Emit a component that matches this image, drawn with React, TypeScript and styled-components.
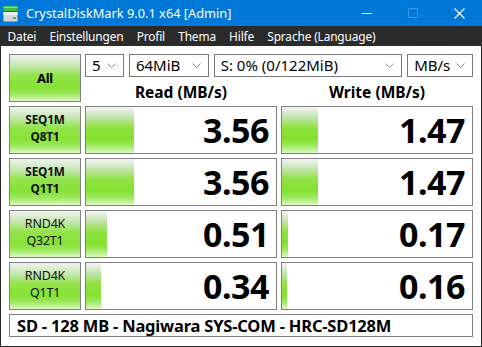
import styled, { createGlobalStyle } from 'styled-components';

const GlobalStyle = createGlobalStyle`
  html, body {
    margin: 0;
    padding: 0;
    background: #ffffff;
  }
  body {
    font-family: 'Noto Sans', 'Open Sans', sans-serif;
  }
`;

interface Result {
  line1: string;
  line2: string;
  bold: boolean;
  read: string;
  write: string;
  readFill: number;
  writeFill: number;
}

const results: Result[] = [
  { line1: 'SEQ1M', line2: 'Q8T1', bold: true, read: '3.56', write: '1.47', readFill: 48, writeFill: 36 },
  { line1: 'SEQ1M', line2: 'Q1T1', bold: true, read: '3.56', write: '1.47', readFill: 48, writeFill: 36 },
  { line1: 'RND4K', line2: 'Q32T1', bold: false, read: '0.51', write: '0.17', readFill: 21, writeFill: 6 },
  { line1: 'RND4K', line2: 'Q1T1', bold: false, read: '0.34', write: '0.16', readFill: 15, writeFill: 5 },
];

const menus = ['Datei', 'Einstellungen', 'Profil', 'Thema', 'Hilfe', 'Sprache (Language)'];

const combos = [
  { label: '5', width: 39 },
  { label: '64MiB', width: 80 },
  { label: 'S: 0% (0/122MiB)', width: 189 },
  { label: 'MB/s', width: 66 },
];

const DriveIcon = () => (
  <svg width="15" height="16" viewBox="0 0 15 16">
    <rect x="0.5" y="0.5" width="14" height="4.5" fill="#3cbf3c" />
    <rect x="0.5" y="0.5" width="14" height="1.5" fill="#7de07d" />
    <rect x="0.5" y="5" width="14" height="1" fill="#2d6e2d" />
    <rect x="0.5" y="6" width="14" height="9.5" fill="#d6d6d6" />
    <rect x="0.5" y="6" width="14" height="3" fill="#eeeeee" />
    <rect x="10" y="11" width="3" height="2" fill="#3cbf3c" />
  </svg>
);

const Chevron = () => (
  <svg width="9" height="5" viewBox="0 0 9 5">
    <path d="M0.5 0.5 L4.5 4.5 L8.5 0.5" fill="none" stroke="#8a8a8a" strokeWidth="1" />
  </svg>
);

const App = () => {
  return (
    <Window>
      <GlobalStyle />
      <TitleBar>
        <IconBox>
          <DriveIcon />
        </IconBox>
        <TitleText>CrystalDiskMark 9.0.1 x64 [Admin]</TitleText>
        <Controls>
          <ControlButton>
            <svg width="10" height="10" viewBox="0 0 10 10">
              <path d="M0 5.5 H10" stroke="#ffffff" strokeWidth="1" />
            </svg>
          </ControlButton>
          <ControlButton>
            <svg width="10" height="10" viewBox="0 0 10 10">
              <rect x="0.5" y="0.5" width="9" height="9" fill="none" stroke="#3d98e0" strokeWidth="1" />
            </svg>
          </ControlButton>
          <ControlButton>
            <svg width="11" height="11" viewBox="0 0 11 11">
              <path d="M0.5 0.5 L10.5 10.5 M10.5 0.5 L0.5 10.5" stroke="#ffffff" strokeWidth="1.1" />
            </svg>
          </ControlButton>
        </Controls>
      </TitleBar>
      <MenuBar>
        {menus.map(m => (
          <MenuItem key={m}>{m}</MenuItem>
        ))}
      </MenuBar>
      <Client>
        <Grid>
          <TestButton>
            <AllLabel>All</AllLabel>
          </TestButton>
          <TopArea>
            <ComboRow>
              {combos.map(c => (
                <Combo key={c.label} $width={c.width}>
                  <span>{c.label}</span>
                  <Chevron />
                </Combo>
              ))}
            </ComboRow>
            <HeaderRow>
              <Header>Read (MB/s)</Header>
              <Header>Write (MB/s)</Header>
            </HeaderRow>
          </TopArea>
          {results.map((r, i) => (
            <Row key={i} r={r} />
          ))}
          <Footer>SD - 128 MB - Nagiwara SYS-COM - HRC-SD128M</Footer>
        </Grid>
      </Client>
    </Window>
  );
};

const Row = ({ r }: { r: Result }) => (
  <>
    <TestButton>
      <TestLabel $bold={r.bold}>
        <LabelLine>{r.line1}</LabelLine>
        <LabelLine>{r.line2}</LabelLine>
      </TestLabel>
    </TestButton>
    <Meter>
      <Fill style={{ width: r.readFill }} />
      <Value>{r.read}</Value>
    </Meter>
    <Meter>
      <Fill style={{ width: r.writeFill }} />
      <Value>{r.write}</Value>
    </Meter>
  </>
);

export default App;

const Window = styled.div`
  width: 482px;
  height: 347px;
  display: flex;
  flex-direction: column;
  box-sizing: border-box;
  overflow: hidden;
`;

const TitleBar = styled.div`
  height: 26px;
  background: #0078d7;
  display: flex;
  align-items: center;
  color: #ffffff;
`;

const IconBox = styled.div`
  width: 15px;
  height: 16px;
  margin-left: 3px;
  margin-top: 2px;
  display: flex;
`;

const TitleText = styled.div`
  margin-left: 8px;
  font-size: 12.8px;
  line-height: 26px;
  flex: 1;
`;

const Controls = styled.div`
  display: flex;
  height: 26px;
`;

const ControlButton = styled.div`
  width: 46px;
  height: 26px;
  display: flex;
  align-items: center;
  justify-content: center;
`;

const MenuBar = styled.div`
  height: 20px;
  background: #2b2b2b;
  display: flex;
  align-items: center;
  padding-left: 1px;
`;

const MenuItem = styled.div`
  color: #ffffff;
  font-size: 11.9px;
  padding: 0 6.6px;
  line-height: 20px;
  letter-spacing: -0.15px;
`;

const Client = styled.div`
  flex: 1;
  background: #ffffff;
  border: 1px solid #262626;
  border-top: none;
  padding: 8px 8px 0 8px;
`;

const Grid = styled.div`
  display: grid;
  grid-template-columns: 72px 192px 192px;
  grid-template-rows: repeat(5, 48px) 23px;
  gap: 4px;
`;

const TestButton = styled.div`
  box-sizing: border-box;
  border: 1px solid #808080;
  background: linear-gradient(
    to bottom,
    #eef3ec 0%,
    #c9e7b6 22%,
    #93e44a 45%,
    #86e234 70%,
    #9ee85e 85%,
    #ddfac4 100%
  );
  display: flex;
  align-items: center;
  justify-content: center;
  color: #000000;
`;

const AllLabel = styled.span`
  font-size: 13px;
  font-weight: 700;
  letter-spacing: -0.3px;
`;

const TestLabel = styled.div<{ $bold: boolean }>`
  display: flex;
  flex-direction: column;
  align-items: center;
  font-size: ${p => (p.$bold ? '11.8px' : '12.5px')};
  font-weight: ${p => (p.$bold ? 700 : 400)};
  line-height: 17px;
  letter-spacing: -0.2px;
  margin-bottom: 4px;
  color: #111111;
`;

const LabelLine = styled.div`
  display: block;
  overflow: hidden;
`;

const TopArea = styled.div`
  grid-column: 2 / 4;
  display: flex;
  flex-direction: column;
`;

const ComboRow = styled.div`
  display: flex;
  gap: 5px;
  height: 23px;
`;

const Combo = styled.div<{ $width: number }>`
  width: ${p => p.$width}px;
  box-sizing: border-box;
  border: 1px solid #7a7a7a;
  display: flex;
  align-items: center;
  justify-content: space-between;
  padding: 0 7px 0 6px;
  font-size: 15px;
  color: #000000;
  line-height: 21px;
`;

const HeaderRow = styled.div`
  display: grid;
  grid-template-columns: 192px 192px;
  gap: 4px;
  height: 25px;
`;

const Header = styled.div`
  text-align: center;
  font-size: 15.5px;
  font-weight: 700;
  line-height: 16px;
  padding-top: 7px;
  color: #000000;
`;

const Meter = styled.div`
  position: relative;
  box-sizing: border-box;
  border: 1px solid #808080;
  background: #ffffff;
  display: flex;
  align-items: center;
  justify-content: flex-end;
  overflow: hidden;
`;

const Fill = styled.div`
  position: absolute;
  left: 0;
  top: 0;
  bottom: 0;
  background: linear-gradient(
    to bottom,
    #f4f6f3 0%,
    #c3e3ad 22%,
    #8ee43f 45%,
    #82e130 70%,
    #a1e965 85%,
    #dcf9c4 100%
  );
`;

const Value = styled.span`
  position: relative;
  font-size: 34px;
  font-weight: 700;
  line-height: 46px;
  padding-right: 7px;
  color: #000000;
  letter-spacing: -0.5px;
`;

const Footer = styled.div`
  grid-column: 1 / 4;
  box-sizing: border-box;
  border: 1px solid #808080;
  display: flex;
  align-items: center;
  padding-left: 7px;
  font-size: 16.5px;
  font-weight: 700;
  color: #000000;
  letter-spacing: -0.2px;
`;
